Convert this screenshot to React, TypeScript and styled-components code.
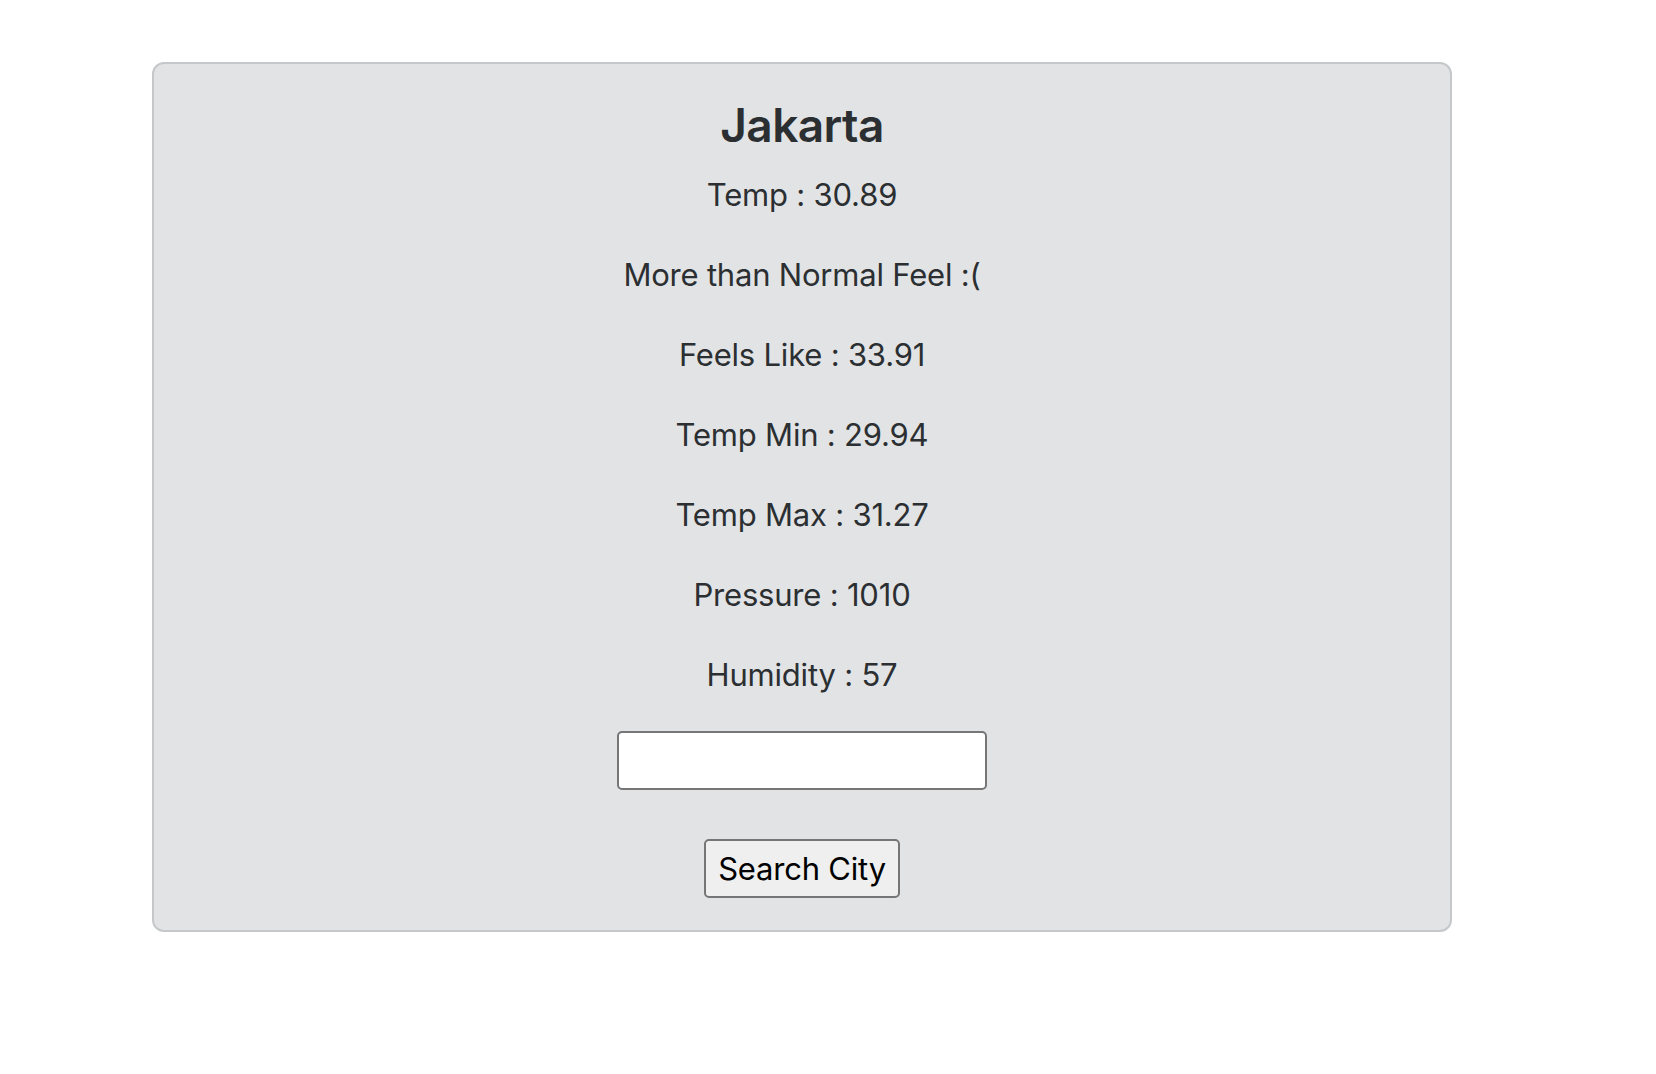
import React from "react";
import styled, { createGlobalStyle } from "styled-components";

const Global = createGlobalStyle`
  html, body { margin: 0; padding: 0; background: #ffffff; }
  body { font-family: Inter, "Noto Sans", sans-serif; }
  * { box-sizing: border-box; }
`;

const Page = styled.div`
  padding: 62px 0 0 152px;
`;

const Card = styled.div`
  width: 1300px;
  background: #e2e3e5;
  border: 2px solid #c4c8cb;
  border-radius: 12px;
  padding: 33px 32px 32px;
  display: flex;
  flex-direction: column;
  align-items: center;
  color: #2b2f32;
`;

const City = styled.h3`
  margin: 0 0 16px;
  font-size: 46px;
  line-height: 57.6px;
  font-weight: 600;
  letter-spacing: -0.6px;
`;

const Line = styled.p`
  margin: 0 0 32px;
  font-size: 31px;
  line-height: 48px;
  font-weight: 400;
  letter-spacing: -0.2px;
`;

const SearchInput = styled.input`
  width: 370px;
  height: 59px;
  border: 2px solid #767676;
  border-radius: 5px;
  background: #ffffff;
  margin: 0 0 49px;
  padding: 2px 6px;
  font-size: 32px;
  outline: none;
`;

const SearchButton = styled.button`
  width: 196px;
  height: 59px;
  border: 2px solid #767676;
  border-radius: 5px;
  background: #efefef;
  color: #000000;
  font-family: Inter, "Noto Sans", sans-serif;
  font-size: 31px;
  letter-spacing: -0.2px;
  padding: 0;
  cursor: pointer;
`;

const rows = [
  "Temp : 30.89",
  "More than Normal Feel :(",
  "Feels Like : 33.91",
  "Temp Min : 29.94",
  "Temp Max : 31.27",
  "Pressure : 1010",
  "Humidity : 57",
];

export default function App() {
  return (
    <>
      <Global />
      <Page>
        <Card>
          <City>Jakarta</City>
          {rows.map((r) => (
            <Line key={r}>{r}</Line>
          ))}
          <SearchInput type="text" />
          <SearchButton>Search City</SearchButton>
        </Card>
      </Page>
    </>
  );
}
